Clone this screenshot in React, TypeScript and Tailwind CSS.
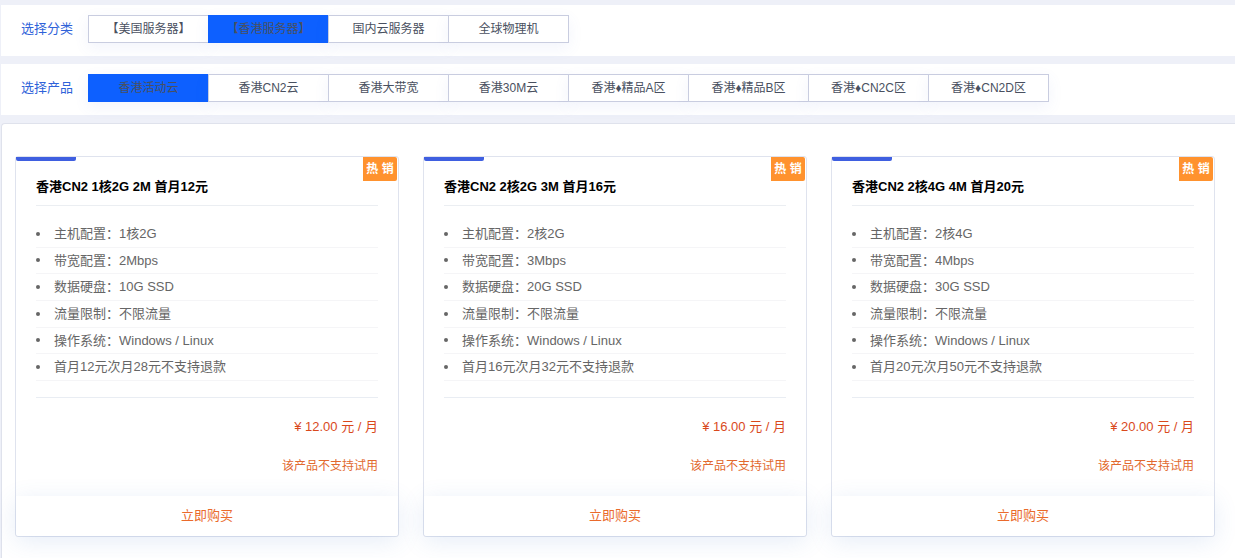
import { useState } from "react";

type Plan = {
  title: string;
  specs: string[];
  price: string;
};

const categories = ["【美国服务器】", "【香港服务器】", "国内云服务器", "全球物理机"];

const products = [
  "香港活动云",
  "香港CN2云",
  "香港大带宽",
  "香港30M云",
  "香港♦精品A区",
  "香港♦精品B区",
  "香港♦CN2C区",
  "香港♦CN2D区",
];

const plans: Plan[] = [
  {
    title: "香港CN2 1核2G 2M 首月12元",
    specs: [
      "主机配置：1核2G",
      "带宽配置：2Mbps",
      "数据硬盘：10G SSD",
      "流量限制：不限流量",
      "操作系统：Windows / Linux",
      "首月12元次月28元不支持退款",
    ],
    price: "12.00",
  },
  {
    title: "香港CN2 2核2G 3M 首月16元",
    specs: [
      "主机配置：2核2G",
      "带宽配置：3Mbps",
      "数据硬盘：20G SSD",
      "流量限制：不限流量",
      "操作系统：Windows / Linux",
      "首月16元次月32元不支持退款",
    ],
    price: "16.00",
  },
  {
    title: "香港CN2 2核4G 4M 首月20元",
    specs: [
      "主机配置：2核4G",
      "带宽配置：4Mbps",
      "数据硬盘：30G SSD",
      "流量限制：不限流量",
      "操作系统：Windows / Linux",
      "首月20元次月50元不支持退款",
    ],
    price: "20.00",
  },
];

function FilterRow({ id, label, options, initial }: { id: string; label: string; options: string[]; initial: number }) {
  const [selected, setSelected] = useState(initial);
  return (
    <section className="flex items-start bg-white px-5 pt-2.5 pb-[13px]">
      <h2 id={id} className="shrink-0 text-[13px] leading-7 text-[#2f62d9]">
        {label}
      </h2>
      <div role="group" aria-labelledby={id} className="ml-[15px] flex flex-wrap pr-px">
        {options.map((option, index) => (
          <button
            key={option}
            type="button"
            aria-pressed={index === selected}
            onClick={() => setSelected(index)}
            className={
              index === selected
                ? "-mr-px h-7 w-[121px] border border-[#0d60ff] bg-[#0d60ff] text-xs whitespace-nowrap text-[#495060] shadow-[0_5px_15px_rgba(90,120,220,0.08)]"
                : "-mr-px h-7 w-[121px] border border-[#c9cde0] bg-white text-xs whitespace-nowrap text-[#495060] shadow-[0_5px_15px_rgba(90,120,220,0.08)]"
            }
          >
            {option}
          </button>
        ))}
      </div>
    </section>
  );
}

function PlanCard({ plan }: { plan: Plan }) {
  return (
    <article className="relative flex flex-col rounded-[3px] border border-[#dfe3ee] bg-white">
      <span className="absolute top-0 left-0 h-1 w-15 rounded-b-[2px] bg-[#3f5fe0]" />
      <span className="absolute top-0 right-px flex h-6 w-[34px] items-center justify-center rounded-r-[2px] bg-[#ff922e] text-xs font-bold whitespace-nowrap text-white">
        热 销
      </span>
      <div className="px-5">
        <h3 className="border-b border-[#ebeef2] pt-[18px] pb-1.5 text-[13px] leading-6 font-bold text-black">
          {plan.title}
        </h3>
        <ul className="mt-[15px] grid h-40 auto-rows-fr text-[13px] text-[#666666]">
          {plan.specs.map((spec) => (
            <li key={spec} className="flex items-center gap-3.5 border-b border-[#f5f5f7]">
              <span aria-hidden="true" className="size-1 shrink-0 rounded-full bg-[#666666]" />
              {spec}
            </li>
          ))}
        </ul>
        <div className="mt-4 border-t border-[#e9edf3] pt-4 text-right">
          <p className="text-[13px] leading-[26px] text-[#d9491c]">¥ {plan.price} 元 / 月</p>
          <p className="mt-3.5 text-xs leading-6 text-[#e2692f]">该产品不支持试用</p>
        </div>
      </div>
      <button
        type="button"
        className="mt-[18px] h-10 w-full rounded-b-[3px] bg-white text-[13px] text-[#ea6a2c] shadow-[0_5px_25px_rgba(70,120,200,0.14)]"
      >
        立即购买
      </button>
    </article>
  );
}

export default function App() {
  return (
    <main className="flex min-h-screen flex-col gap-2 bg-[#eef0f8] pt-[5px] pl-px font-['Liberation_Sans','Noto_Sans_CJK_SC',sans-serif]">
      <FilterRow id="category-label" label="选择分类" options={categories} initial={1} />
      <FilterRow id="product-label" label="选择产品" options={products} initial={0} />
      <section className="grow rounded-tl-[4px] border-t border-l border-[#dfe2ec] bg-white pt-8 pr-5 pb-5 pl-[13px]">
        <div className="grid grid-cols-3 gap-6">
          {plans.map((plan) => (
            <PlanCard key={plan.title} plan={plan} />
          ))}
        </div>
      </section>
    </main>
  );
}
